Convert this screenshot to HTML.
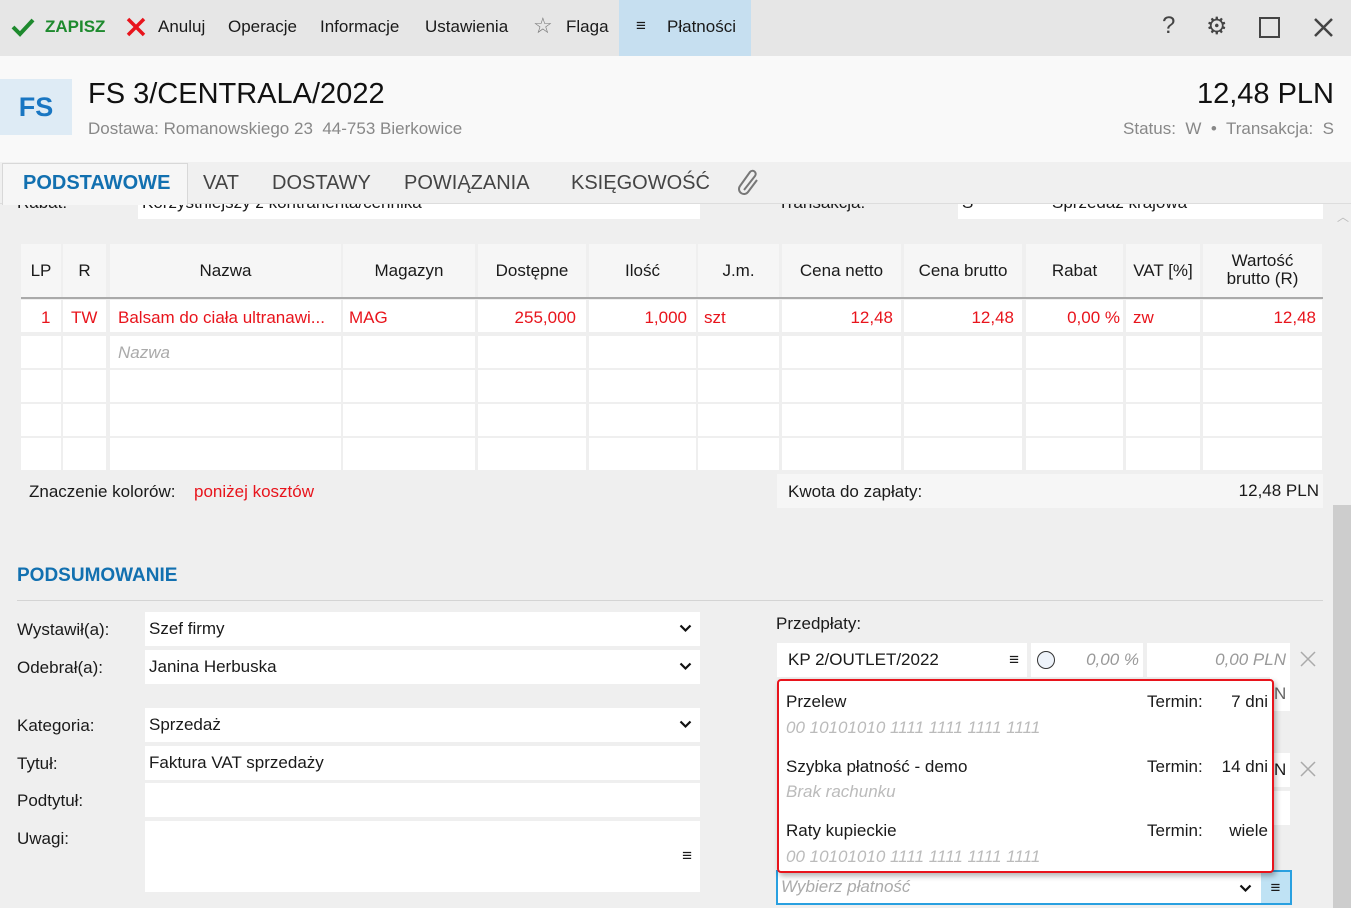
<!DOCTYPE html>
<html><head><meta charset="utf-8"><style>
*{box-sizing:border-box;margin:0;padding:0}
body{width:1351px;height:908px;overflow:hidden;background:#efefef;font-family:"Liberation Sans",sans-serif;font-size:17px;color:#1a1a1a;position:relative}
.a{position:absolute;white-space:nowrap}
.tb{left:0;top:0;width:1351px;height:56px;background:#e6e6e6}
.hd{left:0;top:56px;width:1351px;height:106px;background:#f9f9f9}
.tabs{left:0;top:162px;width:1351px;height:42px;background:#f0f0f0;border-bottom:1px solid #ddd}
.c{position:absolute;background:#fff}
.h{position:absolute;background:#f6f6f6;text-align:center;line-height:53px}
.inp{position:absolute;background:#fff;height:34px;line-height:34px;padding-left:4px}
.g{color:#aaa;font-style:italic}
.r{color:#e8141c}
.chev{position:absolute;right:8px;top:12px}
</style></head><body>
<!-- partially hidden row under tabs -->
<div class="a" style="left:138px;top:190px;width:562px;height:29px;background:#fff"></div>
<div class="a" style="left:958px;top:190px;width:365px;height:29px;background:#fff"></div>
<div class="a" style="left:17px;top:193px">Rabat:</div>
<div class="a" style="left:142px;top:193px">Korzystniejszy z kontrahenta/cennika</div>
<div class="a" style="left:678px;top:190px">–</div>
<div class="a" style="left:778px;top:193px">Transakcja:</div>
<div class="a" style="left:962px;top:193px">S</div>
<div class="a" style="left:1052px;top:193px">Sprzedaż krajowa</div>
<div class="a" style="left:1302px;top:195px;font-size:10px">▼</div>

<div class="a tb"></div>
<svg class="a" style="left:11px;top:17px" width="24" height="20" viewBox="0 0 24 20"><path d="M2 10 L9 17 L22 3" fill="none" stroke="#1e8a2e" stroke-width="4"/></svg>
<div class="a" style="left:45px;top:17px;color:#1e8a2e;font-weight:bold">ZAPISZ</div>
<svg class="a" style="left:126px;top:17px" width="20" height="20" viewBox="0 0 20 20"><path d="M2 2 L18 18 M18 2 L2 18" stroke="#e8141c" stroke-width="3.5"/></svg>
<div class="a" style="left:158px;top:17px">Anuluj</div>
<div class="a" style="left:228px;top:17px">Operacje</div>
<div class="a" style="left:320px;top:17px">Informacje</div>
<div class="a" style="left:425px;top:17px">Ustawienia</div>
<div class="a" style="left:533px;top:13px;font-size:22px;color:#777">☆</div>
<div class="a" style="left:566px;top:17px">Flaga</div>
<div class="a" style="left:619px;top:0;width:132px;height:56px;background:#c6dff0"></div>
<div class="a" style="left:636px;top:16px">≡</div>
<div class="a" style="left:667px;top:17px">Płatności</div>
<div class="a" style="left:1162px;top:12px;font-size:24px;color:#444">?</div>
<div class="a" style="left:1206px;top:12px;font-size:24px;color:#444">⚙</div>
<div class="a" style="left:1259px;top:17px;width:21px;height:21px;border:2.5px solid #444"></div>
<svg class="a" style="left:1314px;top:18px" width="19" height="19" viewBox="0 0 19 19"><path d="M1 1 L18 18 M18 1 L1 18" stroke="#444" stroke-width="2.5"/></svg>

<div class="a hd"></div>
<div class="a" style="left:0;top:79px;width:72px;height:56px;background:#deebf5;color:#1976c2;font-size:27px;line-height:56px;text-align:center;font-weight:bold">FS</div>
<div class="a" style="left:88px;top:78px;font-size:29px;color:#111">FS 3/CENTRALA/2022</div>
<div class="a" style="left:88px;top:119px;color:#888">Dostawa: Romanowskiego 23&nbsp; 44-753 Bierkowice</div>
<div class="a" style="right:17px;top:78px;font-size:29px;color:#111">12,48 PLN</div>
<div class="a" style="right:17px;top:119px;color:#888">Status:&nbsp; W &nbsp;•&nbsp; Transakcja:&nbsp; S</div>

<div class="a tabs"></div>
<div class="a" style="left:2px;top:163px;width:186px;height:42px;background:#f6f6f6;border:1px solid #d8d8d8;border-bottom:none"></div>
<div class="a" style="left:23px;top:172px;font-size:20px;color:#1270b0;font-weight:bold">PODSTAWOWE</div>
<div class="a" style="left:203px;top:172px;font-size:20px;color:#444">VAT</div>
<div class="a" style="left:272px;top:172px;font-size:20px;color:#444">DOSTAWY</div>
<div class="a" style="left:404px;top:172px;font-size:20px;color:#444">POWIĄZANIA</div>
<div class="a" style="left:571px;top:172px;font-size:20px;color:#444">KSIĘGOWOŚĆ</div>
<svg class="a" style="left:736px;top:168px" width="26" height="28" viewBox="0 0 26 28"><path d="M8 22 L19 8 A3 3 0 0 0 14 4 L4 18 A5 5 0 0 0 12 24 L21 12" fill="none" stroke="#777" stroke-width="2"/></svg>
<div class="a" style="left:1337px;top:208px;color:#bbb;font-size:12px">︿</div>
<div class="a" style="left:1333px;top:505px;width:18px;height:403px;background:#cdcdcd"></div>

<div class="h" style="left:21px;top:244px;width:40px;height:53px">LP</div>
<div class="h" style="left:63px;top:244px;width:43px;height:53px">R</div>
<div class="h" style="left:110px;top:244px;width:231px;height:53px">Nazwa</div>
<div class="h" style="left:343px;top:244px;width:132px;height:53px">Magazyn</div>
<div class="h" style="left:478px;top:244px;width:108px;height:53px">Dostępne</div>
<div class="h" style="left:589px;top:244px;width:107px;height:53px">Ilość</div>
<div class="h" style="left:698px;top:244px;width:81px;height:53px">J.m.</div>
<div class="h" style="left:782px;top:244px;width:119px;height:53px">Cena netto</div>
<div class="h" style="left:904px;top:244px;width:118px;height:53px">Cena brutto</div>
<div class="h" style="left:1026px;top:244px;width:97px;height:53px">Rabat</div>
<div class="h" style="left:1126px;top:244px;width:74px;height:53px">VAT [%]</div>
<div class="h" style="left:1203px;top:244px;width:119px;height:53px;line-height:18px;padding-top:8px">Wartość<br>brutto (R)</div>
<div class="a" style="left:21px;top:297px;width:1302px;height:2px;background:#aaa"></div>
<div id="rows"></div>
<script>
var cols=[[21,40],[63,43],[110,231],[343,132],[478,108],[589,107],[698,81],[782,119],[904,118],[1026,97],[1126,74],[1203,119]];
var ys=[300,336,370,404,438],h='';
ys.forEach(function(y){cols.forEach(function(c){h+='<div class="c" style="left:'+c[0]+'px;top:'+y+'px;width:'+c[1]+'px;height:32px"></div>';});});
document.getElementById('rows').innerHTML=h;
</script>
<div class="a r" style="left:41px;top:308px">1</div>
<div class="a r" style="left:71px;top:308px">TW</div>
<div class="a r" style="left:118px;top:308px">Balsam do ciała ultranawi...</div>
<div class="a r" style="left:349px;top:308px">MAG</div>
<div class="a r" style="right:775px;top:308px">255,000</div>
<div class="a r" style="right:664px;top:308px">1,000</div>
<div class="a r" style="left:704px;top:308px">szt</div>
<div class="a r" style="right:458px;top:308px">12,48</div>
<div class="a r" style="right:337px;top:308px">12,48</div>
<div class="a r" style="right:231px;top:308px">0,00 %</div>
<div class="a r" style="left:1133px;top:308px">zw</div>
<div class="a r" style="right:35px;top:308px">12,48</div>
<div class="a g" style="left:118px;top:343px">Nazwa</div>

<div class="a" style="left:29px;top:482px">Znaczenie kolorów:</div>
<div class="a r" style="left:194px;top:482px">poniżej kosztów</div>
<div class="a" style="left:777px;top:474px;width:546px;height:34px;background:#f6f6f6"></div>
<div class="a" style="left:788px;top:482px">Kwota do zapłaty:</div>
<div class="a" style="right:32px;top:481px">12,48 PLN</div>

<div class="a" style="left:17px;top:565px;font-size:19px;font-weight:bold;color:#1270b0">PODSUMOWANIE</div>
<div class="a" style="left:17px;top:600px;width:1306px;height:1px;background:#d4d4d4"></div>

<div class="a" style="left:17px;top:620px">Wystawił(a):</div>
<div class="a" style="left:17px;top:658px">Odebrał(a):</div>
<div class="a" style="left:17px;top:716px">Kategoria:</div>
<div class="a" style="left:17px;top:754px">Tytuł:</div>
<div class="a" style="left:17px;top:791px">Podtytuł:</div>
<div class="a" style="left:17px;top:829px">Uwagi:</div>
<div class="inp" style="left:145px;top:612px;width:555px">Szef firmy<svg class="chev" width="13" height="9" viewBox="0 0 13 9"><path d="M1.5 1.5 L6.5 6.5 L11.5 1.5" fill="none" stroke="#111" stroke-width="2.2"/></svg></div>
<div class="inp" style="left:145px;top:650px;width:555px">Janina Herbuska<svg class="chev" width="13" height="9" viewBox="0 0 13 9"><path d="M1.5 1.5 L6.5 6.5 L11.5 1.5" fill="none" stroke="#111" stroke-width="2.2"/></svg></div>
<div class="inp" style="left:145px;top:708px;width:555px">Sprzedaż<svg class="chev" width="13" height="9" viewBox="0 0 13 9"><path d="M1.5 1.5 L6.5 6.5 L11.5 1.5" fill="none" stroke="#111" stroke-width="2.2"/></svg></div>
<div class="inp" style="left:145px;top:746px;width:555px">Faktura VAT sprzedaży</div>
<div class="inp" style="left:145px;top:783px;width:555px"></div>
<div class="inp" style="left:145px;top:821px;width:555px;height:71px"><span style="position:absolute;right:8px;top:18px">≡</span></div>

<div class="a" style="left:776px;top:614px">Przedpłaty:</div>
<div class="inp" style="left:777px;top:643px;width:250px;padding-left:11px">KP 2/OUTLET/2022<span style="position:absolute;right:8px">≡</span></div>
<div class="inp" style="left:1031px;top:643px;width:112px"><span style="position:absolute;left:6px;top:8px;width:18px;height:18px;border:1.5px solid #333;border-radius:50%;background:#eef3fa"></span><span class="g" style="position:absolute;right:4px;color:#999">0,00 %</span></div>
<div class="inp" style="left:1147px;top:643px;width:143px"><span class="g" style="position:absolute;right:4px;color:#999">0,00 PLN</span></div>
<svg class="a" style="left:1300px;top:651px" width="16" height="16" viewBox="0 0 16 16"><path d="M1 1 L15 15 M15 1 L1 15" stroke="#aaa" stroke-width="1.5"/></svg>
<div class="inp" style="left:1270px;top:677px;width:20px;color:#666">N</div>
<div class="inp" style="left:1270px;top:753px;width:20px">N</div>
<svg class="a" style="left:1300px;top:761px" width="16" height="16" viewBox="0 0 16 16"><path d="M1 1 L15 15 M15 1 L1 15" stroke="#aaa" stroke-width="1.5"/></svg>
<div class="inp" style="left:1270px;top:791px;width:20px"></div>

<div class="a" style="left:776px;top:870px;width:516px;height:35px;background:#fff;border:2px solid #29a0e0"></div>
<div class="a" style="left:1261px;top:872px;width:29px;height:31px;background:#bfe2f4;text-align:center;line-height:31px">≡</div>
<div class="a g" style="left:781px;top:877px">Wybierz płatność</div>
<svg class="a" style="left:1239px;top:884px" width="13" height="9" viewBox="0 0 13 9"><path d="M1.5 1.5 L6.5 6.5 L11.5 1.5" fill="none" stroke="#111" stroke-width="2.2"/></svg>

<div class="a" style="left:777px;top:679px;width:497px;height:194px;background:#fff;border:2px solid #e8141c;border-radius:4px;box-shadow:2px 3px 6px rgba(0,0,0,.3)"></div>
<div class="a" style="left:786px;top:692px">Przelew</div>
<div class="a" style="left:1147px;top:692px">Termin:</div>
<div class="a" style="right:83px;top:692px">7 dni</div>
<div class="a g" style="left:786px;top:718px;color:#bbb">00 10101010 1111 1111 1111 1111</div>
<div class="a" style="left:786px;top:757px">Szybka płatność - demo</div>
<div class="a" style="left:1147px;top:757px">Termin:</div>
<div class="a" style="right:83px;top:757px">14 dni</div>
<div class="a g" style="left:786px;top:782px;color:#bbb">Brak rachunku</div>
<div class="a" style="left:786px;top:821px">Raty kupieckie</div>
<div class="a" style="left:1147px;top:821px">Termin:</div>
<div class="a" style="right:83px;top:821px">wiele</div>
<div class="a g" style="left:786px;top:847px;color:#bbb">00 10101010 1111 1111 1111 1111</div>
</body></html>
